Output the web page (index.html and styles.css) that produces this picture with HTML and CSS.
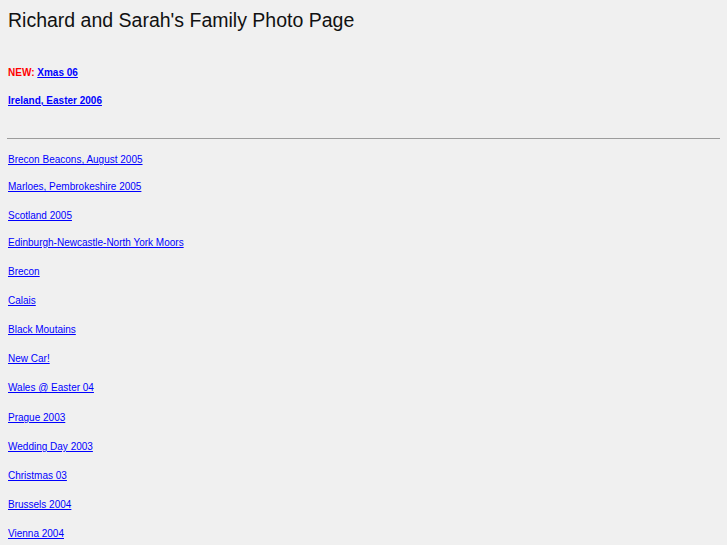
FILE: index.html
```html
<!DOCTYPE html>
<html>
<head>
<meta charset="utf-8">
<title>Richard and Sarah's Family Photo Page</title>
<link rel="stylesheet" href="styles.css">
</head>
<body>
<h1 class="title">Richard and Sarah's Family Photo Page</h1>
<div class="news">
  <p class="news-row"><span class="new">NEW:</span> <a href="#">Xmas 06</a></p>
  <p class="news-row"><a href="#">Ireland, Easter 2006</a></p>
</div>
<hr class="rule">
<ul class="albums">
  <li class="album"><a href="#">Brecon Beacons, August 2005</a></li>
  <li class="album tight"><a href="#">Marloes, Pembrokeshire 2005</a></li>
  <li class="album"><a href="#">Scotland 2005</a></li>
  <li class="album tight"><a href="#">Edinburgh-Newcastle-North York Moors</a></li>
  <li class="album"><a href="#">Brecon</a></li>
  <li class="album"><a href="#">Calais </a></li>
  <li class="album"><a href="#">Black Moutains </a></li>
  <li class="album"><a href="#">New Car!</a></li>
  <li class="album"><a href="#">Wales @ Easter 04</a></li>
  <li class="album loose"><a href="#">Prague 2003</a></li>
  <li class="album"><a href="#">Wedding Day 2003</a></li>
  <li class="album"><a href="#">Christmas 03 </a></li>
  <li class="album"><a href="#">Brussels 2004</a></li>
  <li class="album"><a href="#">Vienna 2004</a></li>
</ul>
</body>
</html>
```
FILE: styles.css
```css
html, body {
  background: #f0f0f0;
}
body {
  margin: 0;
  padding: 0 8px;
  font-family: "Liberation Sans", Arial, sans-serif;
  color: #000;
}
.title {
  margin: 0;
  padding-top: 8px;
  font-size: 19.5px;
  font-weight: normal;
  line-height: 24px;
  color: #111;
}
.news {
  margin-top: 34px;
  display: flex;
  flex-direction: column;
  gap: 14px;
}
.news-row {
  margin: 0;
  font-size: 10px;
  font-weight: bold;
  line-height: 14px;
}
.new {
  color: #ff0000;
}
a {
  color: #0000ff;
  text-decoration: underline;
}
.rule {
  margin: 30px 0 0 -1px;
  height: 0;
  border: 0;
  border-top: 1px solid #9c9c9c;
  width: 713px;
}
.albums {
  list-style: none;
  margin: 14px 0 0;
  padding: 0;
  display: flex;
  flex-direction: column;
}
.album {
  font-size: 10px;
  line-height: 14px;
  height: 14px;
  margin-bottom: 15px;
}
.album.tight {
  margin-top: -2px;
}
.album.loose {
  margin-top: 1px;
}
```
